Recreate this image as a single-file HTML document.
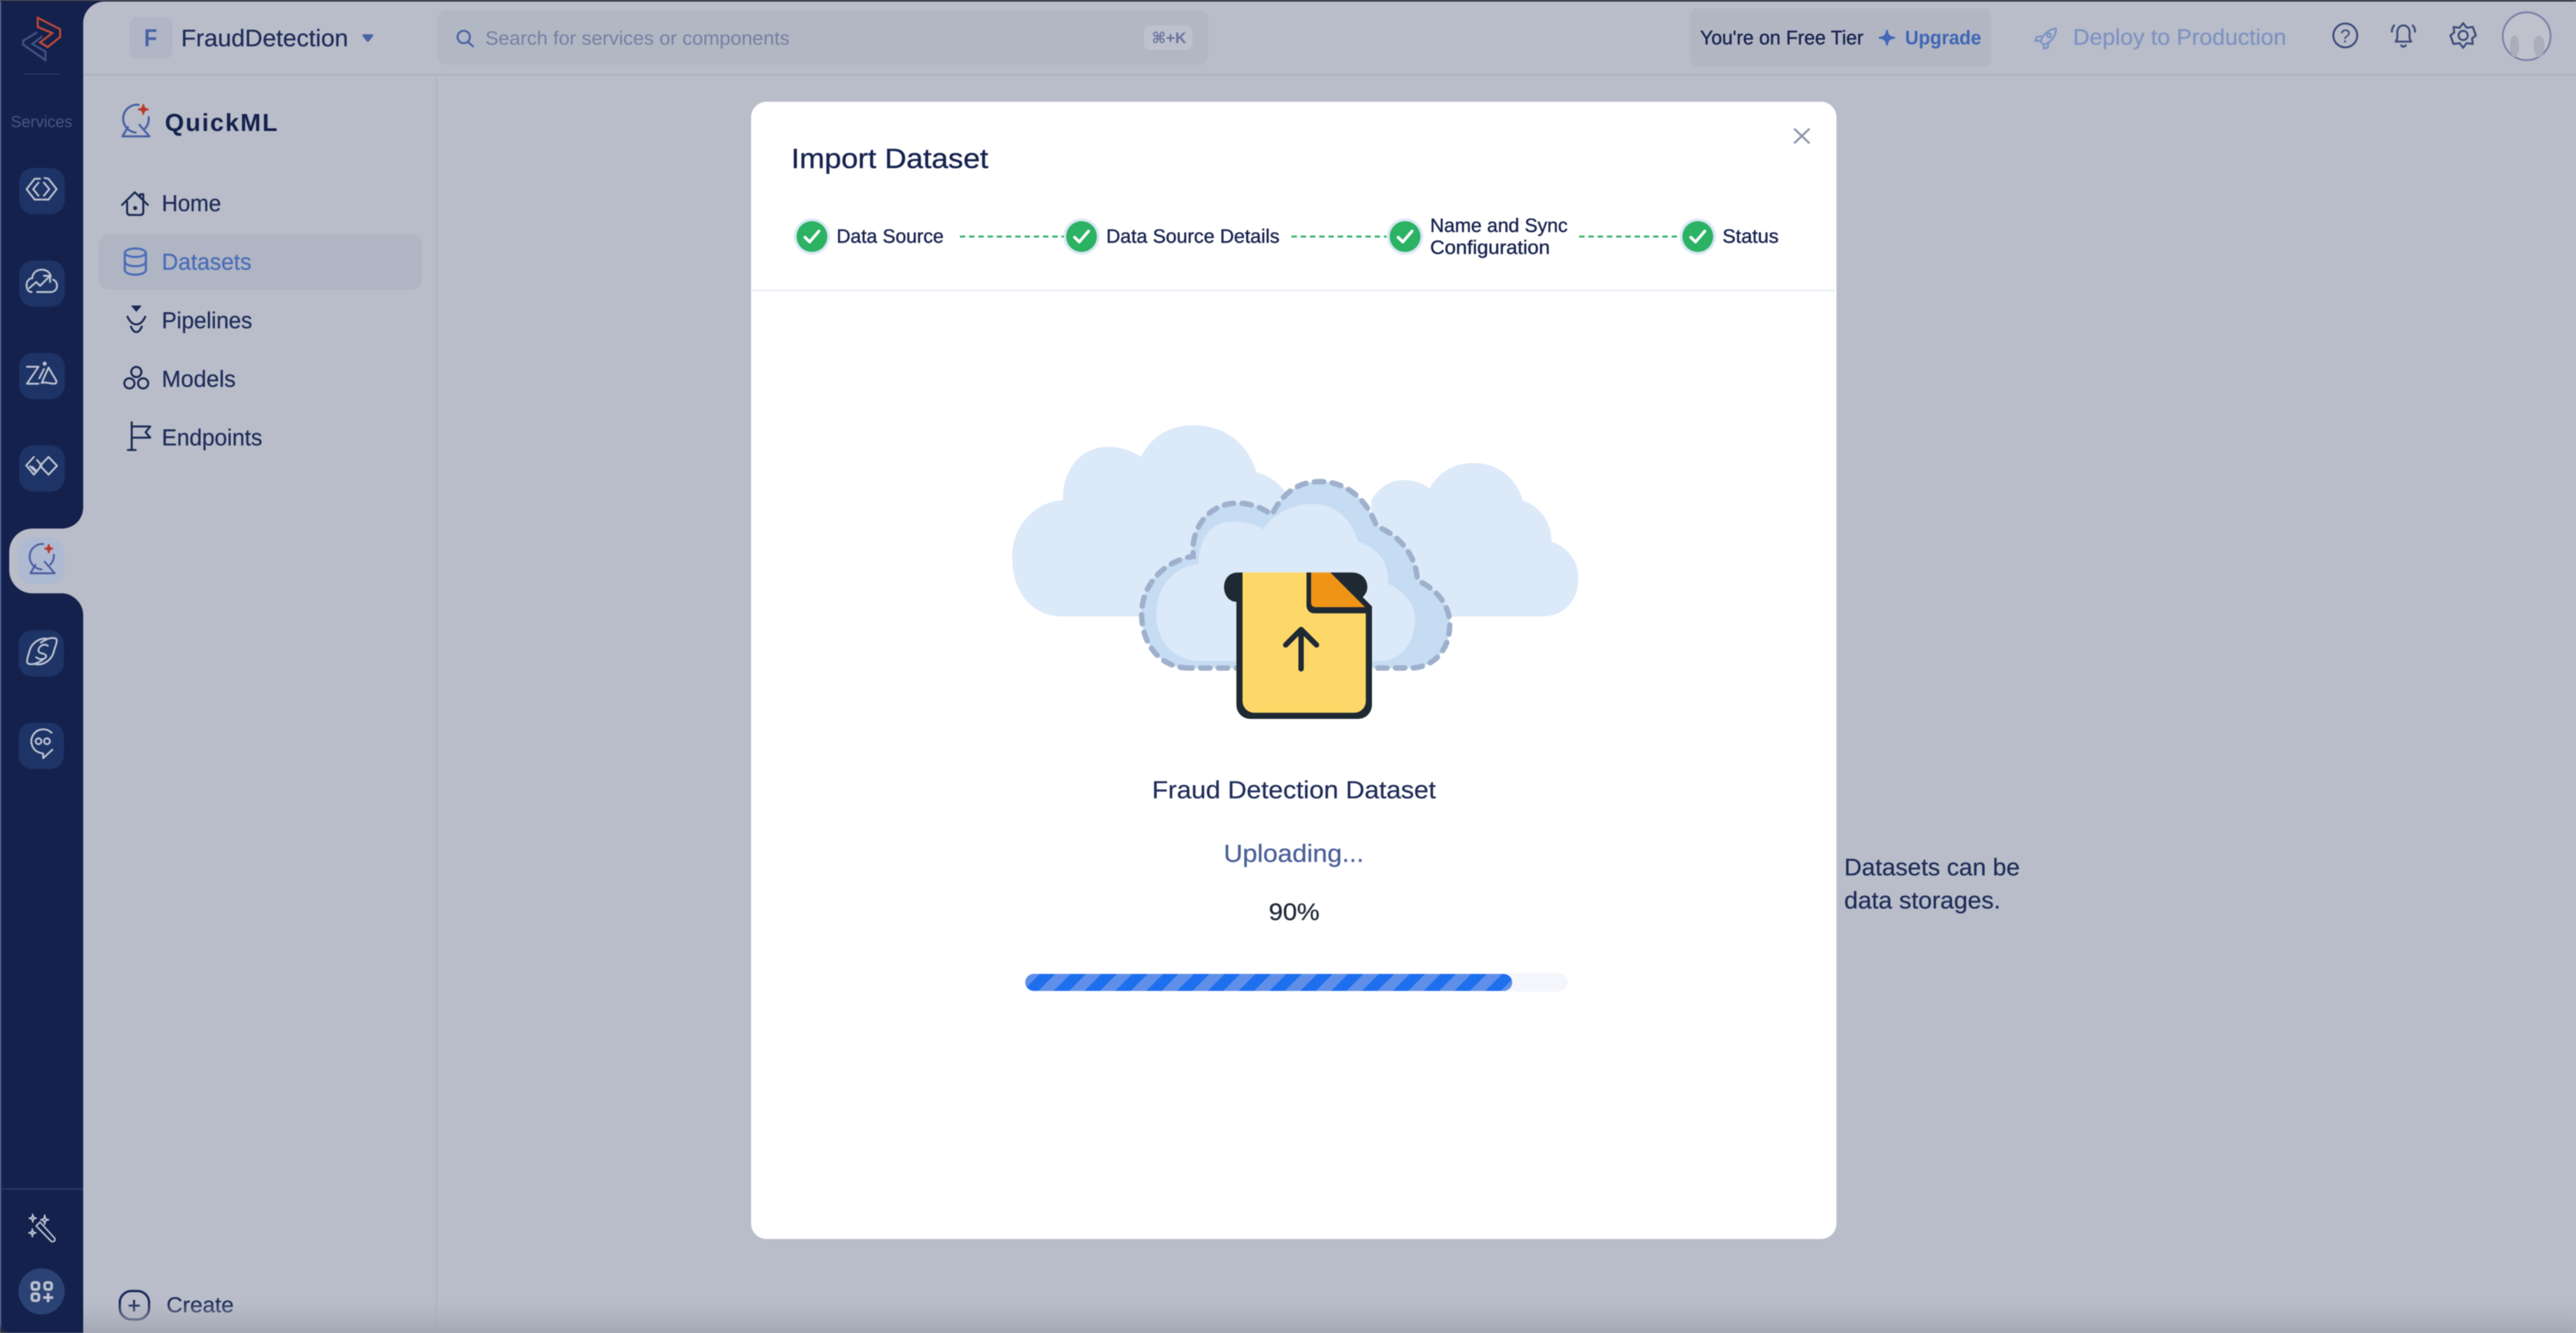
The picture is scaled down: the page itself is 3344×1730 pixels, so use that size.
<!DOCTYPE html>
<html lang="en"><head><meta charset="utf-8"><title>QuickML - Import Dataset</title>
<style>
html,body{margin:0;padding:0;width:3344px;height:1730px;overflow:hidden;background:#b8bdc9}
svg{display:block;position:absolute;left:0;top:0;filter:blur(.5px)}
text{font-family:"Liberation Sans","DejaVu Sans",sans-serif;text-rendering:geometricPrecision}
.n{fill:#1f2c58;stroke:#1f2c58;stroke-width:.25}
.h{fill:#17234f;stroke:#17234f;stroke-width:.4}
.i{fill:none;stroke-linecap:round;stroke-linejoin:round}
</style></head><body>
<svg width="3344" height="1730" viewBox="0 0 3344 1730" xmlns="http://www.w3.org/2000/svg">
<defs>
<pattern id="st" patternUnits="userSpaceOnUse" width="28.3" height="28.3" patternTransform="rotate(45 1331 1264)"><rect width="14.15" height="28.3" fill="#5f8fe9"/></pattern>
<linearGradient id="bt" x1="0" y1="0" x2="0" y2="1"><stop offset="0" stop-color="#a8acb8" stop-opacity="0"/><stop offset="1" stop-color="#a4a8b5"/></linearGradient>
</defs>

<!-- base -->
<rect width="3344" height="1730" fill="#15214d"/>
<rect x="0" y="0" width="2" height="1730" fill="#3a4a82"/>
<path d="M108 30A28 28 0 0 1 136 2H3344V1730H108Z" fill="#b8bdc9"/>
<rect width="3344" height="2" fill="#232a3a"/>
<path d="M0 1716V1730H14A14 14 0 0 1 0 1716Z" fill="#2a2e36"/>

<!-- active notch -->
<path d="M108 658C108 675 95 686 80 686H42A30 30 0 0 0 12 716V740A30 30 0 0 0 42 770H80C95 770 108 783 108 798Z" fill="#b8bdc9"/>

<!-- sidebar logo -->
<path d="M49 23L78 38V48L62 61L52 55L68 43L49 35Z" fill="none" stroke="#c04a35" stroke-width="2.6"/>
<path d="M48 42L30 53V58L59 78V67L42 57L55 47" fill="none" stroke="#3f5487" stroke-width="2.6"/>
<rect x="30" y="95" width="48" height="2" fill="#23315f"/>
<text x="14" y="165" font-size="21" fill="#46567f" textLength="80" lengthAdjust="spacingAndGlyphs">Services</text>

<!-- tiles -->
<g fill="#1e3466">
<rect x="25" y="218" width="59" height="60" rx="18"/>
<rect x="25" y="338" width="59" height="60" rx="18"/>
<rect x="25" y="458" width="59" height="60" rx="18"/>
<rect x="25" y="578" width="59" height="60" rx="18"/>
<rect x="24" y="818" width="59" height="60" rx="18"/>
<rect x="24" y="938" width="59" height="60" rx="18"/>
</g>
<rect x="24" y="698" width="59" height="60" rx="18" fill="#aeb9d2"/>

<g class="i" stroke="#bcc3d2" stroke-width="2.4">
<!-- code -->
<path d="M52 232H45L34.500 245.500L45 259H53"/><path d="M50 237L43 245.500L50 254"/>
<path d="M58 231L63 232L73.500 245.500L63 259H55"/><path d="M57 237L64 245.500L57 254"/>
<!-- cloud -->
<path d="M41 379C36 379 34.500 374 34.500 370C34.500 365 38 361 42 361C42 354 48 350 54 350C60 350 65 353 66 359"/>
<path d="M48 379H66C71 379 74 375 74 371C74 367 72 364 69 363"/>
<path d="M38 374L47 366L52 371L64 359M57 358H65V366"/>
<!-- zia -->
<path d="M35 476H50L35 498H50"/><circle cx="58" cy="472" r="1.400" fill="#bcc3d2"/>
<path d="M57 479L51 491"/>
<path d="M55 495L63 477L73 494Q74 498 70 498C64 498 58 495 54 497"/>
<!-- diamonds -->
<path d="M63 593L74 604.500L63 616L52 604.500Z"/>
<path d="M44 593L34 604L44 616L54 604L48 597"/><path d="M42 606L48 612M39 605L45 611"/>
<!-- planet -->
<path d="M62 829C50 827 40 836 38 846C36 853 34 858 36 861C42 864 50 860 56 856"/>
<path d="M46 862C58 864 68 855 70 845C72 838 75 832 73 829C67 826 59 830 53 834"/>
<path d="M62 838C56 834 49 840 50 845C51 849 58 847 60 851C60 856 52 857 47 853"/>
<!-- chat -->
<path d="M67 951A15.500 15.500 0 1 0 52 977L56 978V984L68 973"/>
<circle cx="50" cy="962" r="3.800"/><circle cx="61" cy="962" r="3.800"/>
</g>

<!-- QuickML sidebar icon -->
<g class="i" stroke="#4a5ea0" stroke-width="2.4">
<path d="M56 706A16.500 16.500 0 1 0 54 739"/><path d="M70 720A17 17 0 0 1 65 733"/>
<path d="M58 729L71 744H39.500L46 733"/>
</g>
<path d="M63.300 706Q63.300 712 69 712Q63.300 712 63.300 718Q63.300 712 57.500 712Q63.300 712 63.300 706Z" fill="#b83a30" stroke="#b83a30" stroke-width="1.800"/>

<!-- bottom sidebar -->
<rect x="2" y="1542" width="106" height="2" fill="#23376a"/>
<g class="i" stroke="#bcc3d2" stroke-width="2">
<path d="M48 1590L52 1586L71 1607Q72 1610 70 1611Q68 1612 66.500 1611L47 1591Z"/>
<path d="M42.500 1576Q42.500 1581 47 1581Q42.500 1581 42.500 1586Q42.500 1581 38 1581Q42.500 1581 42.500 1576Z"/>
<path d="M58 1577Q58 1583 63 1583Q58 1583 58 1589Q58 1583 53 1583Q58 1583 58 1577Z"/>
<path d="M42 1595Q42 1600 46.500 1600Q42 1600 42 1605Q42 1600 37.500 1600Q42 1600 42 1595Z"/>
</g>
<circle cx="54" cy="1676" r="30" fill="#2a4274"/>
<g fill="none" stroke="#bcc1cd" stroke-width="3.600">
<rect x="41.500" y="1664.500" width="9" height="9" rx="2.500"/><rect x="58" y="1664.500" width="9" height="9" rx="2.500"/>
<rect x="41.500" y="1679" width="9" height="9" rx="2.500"/><path d="M62.500 1678V1690M56 1684H69"/>
</g>

<!-- top header -->
<rect x="108" y="96" width="3236" height="2" fill="#adb2c0"/>
<rect x="168" y="22" width="56" height="55" rx="11" fill="#b0b6c6"/>
<text x="187" y="60" font-size="32" font-weight="700" fill="#4a63a5" textLength="17" lengthAdjust="spacingAndGlyphs">F</text>
<text x="235" y="60" font-size="31" class="n" textLength="217" lengthAdjust="spacingAndGlyphs">FraudDetection</text>
<path d="M472 46H483L477.500 53Z" fill="#4a63a5" stroke="#4a63a5" stroke-width="3" stroke-linejoin="round"/>

<rect x="568" y="13" width="1000" height="71" rx="12" fill="#b2b7c4"/>
<g class="i" stroke="#4a63a5" stroke-width="2.600"><circle cx="602" cy="48" r="8"/><path d="M608 55L614 60"/></g>
<text x="630" y="58" font-size="25" fill="#7681a3" textLength="395" lengthAdjust="spacingAndGlyphs">Search for services or components</text>
<rect x="1485" y="33" width="63" height="32" rx="8" fill="#bcc1cd"/>
<text x="1495" y="56" font-size="20" font-weight="700" fill="#6a759c" textLength="45" lengthAdjust="spacingAndGlyphs">⌘+K</text>

<rect x="2194" y="11" width="391" height="75" rx="10" fill="#b2b6c3"/>
<text x="2207" y="57.500" font-size="25.500" class="h" textLength="212" lengthAdjust="spacingAndGlyphs">You're on Free Tier</text>
<path d="M2449.500 39Q2449.500 49 2460 49Q2449.500 49 2449.500 59Q2449.500 49 2439 49Q2449.500 49 2449.500 39Z" fill="#4169b8" stroke="#4169b8" stroke-width="2.500"/>
<text x="2473" y="57.500" font-size="25.500" font-weight="700" fill="#3f66b5" textLength="99" lengthAdjust="spacingAndGlyphs">Upgrade</text>
<g class="i" stroke="#7c93c5" stroke-width="2.400">
<path d="M2669 37C2659 38 2651 46 2649 54L2653 58C2661 56 2669 48 2669 37Z"/>
<path d="M2650 47L2644 48L2642 53L2648 53M2659 57L2658 62L2653 63L2653 58"/>
<circle cx="2660" cy="46" r="2.500"/>
</g>
<text x="2691" y="58" font-size="29" fill="#7f93c2" stroke="#7f93c2" stroke-width=".3" textLength="277" lengthAdjust="spacingAndGlyphs">Deploy to Production</text>
<circle cx="3044.500" cy="46" r="15.500" fill="none" stroke="#3e4c7a" stroke-width="2.600"/>
<text x="3044.500" y="55" font-size="24" fill="#3e4c7a" text-anchor="middle">?</text>
<g class="i" stroke="#3e4c7a" stroke-width="2.600">
<path d="M3110 54C3113 50 3112 46 3112 42C3112 36 3116 33 3120 33C3124 33 3128 36 3128 42C3128 46 3127 50 3130 54Z"/>
<path d="M3117 59Q3120 62 3123 59"/>
<path d="M3105 41C3105 37 3106 35 3108 33M3135 41C3135 37 3134 35 3132 33"/>
<path d="M3197.500 30L3202 36L3210 35L3214 46L3209 50L3210 57L3202 56L3197.500 62L3193 56L3185 57L3181 46L3186 42L3185 35L3193 36Z"/>
<circle cx="3197.500" cy="46" r="6"/>
</g>
<circle cx="3280" cy="47" r="31" fill="#bfc2cc" stroke="#7a83a8" stroke-width="2.400"/>
<ellipse cx="3264" cy="60" rx="6" ry="14" fill="#aaaeba"/>
<ellipse cx="3296" cy="60" rx="7" ry="14" fill="#aaaeba"/>

<!-- secondary sidebar -->
<rect x="565.500" y="98" width="2" height="1632" fill="#afb4c1"/>
<g class="i" stroke="#4a63a5" stroke-width="2.800">
<path d="M180 136A18 18 0 1 0 176 172"/><path d="M193 152A19 19 0 0 1 188 167"/>
<path d="M181 162L194 177H159L166 165"/>
</g>
<path d="M186 135Q186 142 193 142Q186 142 186 149Q186 142 179 142Q186 142 186 135Z" fill="#b83a30" stroke="#b83a30" stroke-width="2"/>
<text x="214" y="170" font-size="32" font-weight="700" fill="#15214d" textLength="146" lengthAdjust="spacing">QuickML</text>

<rect x="128" y="304" width="420" height="72" rx="14" fill="#b0b5c3"/>
<g class="i" stroke="#1b2852" stroke-width="2.600">
<path d="M158.500 266L175 249.500L192 266M182 256V252H186V260"/>
<path d="M165 262V275Q165 279 169 279H182Q186 279 186 275V262"/>
<circle cx="175.500" cy="270" r="1.300" fill="#1b2852"/>
</g>
<g class="i" stroke="#4a6db8" stroke-width="2.800">
<ellipse cx="175.700" cy="328" rx="13.500" ry="5.500"/>
<path d="M162 328V350C162 354 168 356.500 175.700 356.500S189.400 354 189.400 350V328"/>
<path d="M162 339C162 343 168 345.500 175.700 345.500S189.400 343 189.400 339"/>
</g>
<path d="M171 397H183L177 404Z" fill="#1b2852" stroke="#1b2852" stroke-width="1" stroke-linejoin="round"/>
<g class="i" stroke="#1b2852" stroke-width="2.600">
<path d="M165.500 411Q170 421 177 421Q184 421 188.500 411"/>
<path d="M170 424Q173 431 177 431Q181 431 184 424"/>
<path d="M177 482.800m-6.600 0a6.600 6.600 0 1 0 13.200 0a6.600 6.600 0 1 0 -13.200 0"/>
<path d="M168 497.500m-6.600 0a6.600 6.600 0 1 0 13.200 0a6.600 6.600 0 1 0 -13.200 0"/>
<path d="M185.800 497.500m-6.600 0a6.600 6.600 0 1 0 13.200 0a6.600 6.600 0 1 0 -13.200 0"/>
<path d="M171 548V584M166 584H176M171 553.500H195L189 561L195 568H171"/>
</g>
<text x="210" y="274" font-size="30" class="n" textLength="77" lengthAdjust="spacingAndGlyphs">Home</text>
<text x="210" y="350" font-size="30" fill="#4a6db8" stroke="#4a6db8" stroke-width=".25" textLength="116.500" lengthAdjust="spacingAndGlyphs">Datasets</text>
<text x="210" y="426" font-size="30" class="n" textLength="117.500" lengthAdjust="spacingAndGlyphs">Pipelines</text>
<text x="210" y="502" font-size="30" class="n" textLength="96" lengthAdjust="spacingAndGlyphs">Models</text>
<text x="210" y="578" font-size="30" class="n" textLength="130.500" lengthAdjust="spacingAndGlyphs">Endpoints</text>

<rect x="155.500" y="1675.500" width="38" height="37" rx="15" fill="none" stroke="#1b2a5a" stroke-width="3"/>
<path d="M174 1687V1702M167 1694.500H181.500" stroke="#1b2a5a" stroke-width="2.600" fill="none"/>
<text x="216" y="1703" font-size="28" class="n" textLength="87.500" lengthAdjust="spacingAndGlyphs">Create</text>

<!-- background text -->
<text x="2394" y="1136" font-size="31" class="n" textLength="228" lengthAdjust="spacingAndGlyphs">Datasets can be</text>
<text x="2394" y="1179" font-size="31" class="n" textLength="203" lengthAdjust="spacingAndGlyphs">data storages.</text>

<!-- bottom vignette -->
<rect x="108" y="1690" width="3236" height="40" fill="url(#bt)"/>

<!-- modal -->
<rect x="975" y="132" width="1409" height="1476" rx="20" fill="#fff"/>
<text x="1027" y="218" font-size="36" class="h" textLength="256" lengthAdjust="spacingAndGlyphs">Import Dataset</text>
<path d="M2329 167L2349 186M2349 167L2329 186" stroke="#8f97ab" stroke-width="2.800" fill="none"/>
<rect x="977" y="376" width="1405" height="2" fill="#e4ebf5"/>

<g fill="#dbe8f5">
<circle cx="1054" cy="307" r="23.500"/><circle cx="1404" cy="307" r="23.500"/>
<circle cx="1824" cy="307" r="23.500"/><circle cx="2204" cy="307" r="23.500"/>
</g>
<g fill="#2bb263">
<circle cx="1054" cy="307" r="20"/><circle cx="1404" cy="307" r="20"/>
<circle cx="1824" cy="307" r="20"/><circle cx="2204" cy="307" r="20"/>
</g>
<g class="i" stroke="#fff" stroke-width="3.800">
<path d="M1045 308L1051 314L1063 300"/><path d="M1395 308L1401 314L1413 300"/>
<path d="M1815 308L1821 314L1833 300"/><path d="M2195 308L2201 314L2213 300"/>
</g>
<g stroke="#2fb066" stroke-width="2.600" stroke-dasharray="7 5" fill="none">
<path d="M1246 307H1381"/><path d="M1676.500 307H1800"/><path d="M2050 307H2181"/>
</g>
<text x="1086" y="315" font-size="25" class="h" textLength="139" lengthAdjust="spacingAndGlyphs">Data Source</text>
<text x="1436" y="315" font-size="25" class="h" textLength="225" lengthAdjust="spacingAndGlyphs">Data Source Details</text>
<text x="1856.500" y="301" font-size="25" class="h" textLength="178.500" lengthAdjust="spacingAndGlyphs">Name and Sync</text>
<text x="1856.500" y="329.500" font-size="25" class="h" textLength="155.500" lengthAdjust="spacingAndGlyphs">Configuration</text>
<text x="2236" y="315" font-size="25" class="h" textLength="73" lengthAdjust="spacingAndGlyphs">Status</text>

<!-- illustration -->
<g fill="#dbe9f9">
<path d="M1380 800C1340 800 1314 770 1314 723C1314 685 1340 652 1380 649C1378 615 1400 580 1437 580C1455 580 1470 585 1481 593C1495 565 1520 552 1549 552C1590 552 1620 575 1631 613C1650 618 1665 630 1672 645V800Z"/>
<path d="M1780 800V650C1790 632 1805 623 1822 623C1835 623 1847 627 1856 634C1868 612 1888 601 1912 601C1945 601 1968 620 1977 650C1998 655 2015 680 2014 703C2035 710 2049 728 2049 750C2049 780 2030 800 2001 800Z"/>
</g>
<path d="M1544 867C1505 867 1482 835 1482 797C1482 760 1510 728 1549 722C1545 685 1570 653 1606 653C1625 653 1640 660 1651 668C1665 640 1685 625 1713 625C1750 625 1775 650 1787 683C1817 695 1838 720 1840 753C1865 765 1882 785 1882 810C1882 845 1860 867 1830 867Z" fill="#c5dcf3" stroke="#9fb0cc" stroke-width="7" stroke-dasharray="12 11" stroke-linecap="round"/>
<path d="M1560 858C1525 858 1501 835 1501 797C1501 760 1525 735 1556 732C1556 700 1572 677 1598 677C1615 677 1630 680 1640 687C1650 670 1675 654 1703 654C1735 654 1755 675 1763 703C1790 712 1803 730 1802 757C1825 770 1838 785 1837 805C1836 840 1815 858 1790 858Z" fill="#dbe9f9"/>
<path d="M1607 743H1755C1768 743 1775 752 1775 762C1775 768 1772 772 1769 775L1781 787V915A18 18 0 0 1 1763 933H1623A18 18 0 0 1 1605 915V781C1596 781 1589 773 1589 762C1589 752 1595 743 1607 743Z" fill="#1f2933"/>
<path d="M1613 743H1696V786A10 10 0 0 0 1706 796H1773V910A15 15 0 0 1 1758 925H1628A15 15 0 0 1 1613 910Z" fill="#fdd868"/>
<path d="M1702 743H1727L1772 788H1708Q1702 788 1702 782Z" fill="#f09418"/>
<path d="M1689 818V868M1669 837L1689 817L1709 837" fill="none" stroke="#1f2933" stroke-width="7" stroke-linecap="round" stroke-linejoin="round"/>

<!-- upload text -->
<text x="1495.500" y="1036" font-size="32" class="n" textLength="368.500" lengthAdjust="spacingAndGlyphs">Fraud Detection Dataset</text>
<text x="1588.500" y="1118.500" font-size="32" fill="#4b5f9a" stroke="#4b5f9a" stroke-width=".3" textLength="182" lengthAdjust="spacingAndGlyphs">Uploading...</text>
<text x="1647" y="1194" font-size="31" fill="#1f2937" stroke="#1f2937" stroke-width=".3" textLength="66" lengthAdjust="spacingAndGlyphs">90%</text>

<rect x="1331" y="1263" width="704" height="24" rx="12" fill="#f4f6fb"/>
<rect x="1331" y="1264" width="632" height="22" rx="11" fill="#1e6fee"/>
<rect x="1331" y="1264" width="632" height="22" rx="11" fill="url(#st)"/>
</svg>
</body></html>
